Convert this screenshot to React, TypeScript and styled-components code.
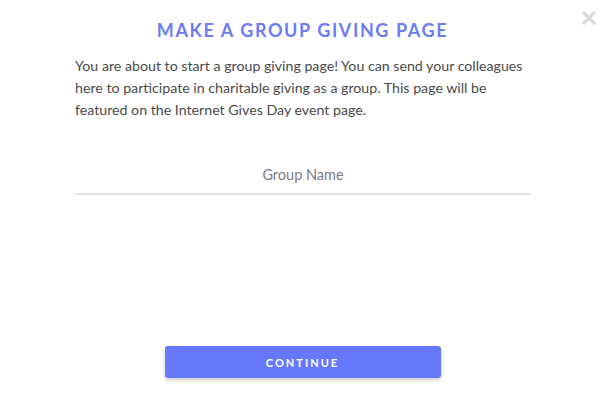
import React from "react";
import styled, { createGlobalStyle } from "styled-components";

const Global = createGlobalStyle`
  html, body { margin: 0; padding: 0; background: #fff; }
  body { font-family: Lato, "Open Sans", sans-serif; }
  * { box-sizing: border-box; }
`;

const Modal = styled.div`
  position: relative;
  width: 605px;
  height: 403px;
  background: #fff;
  display: flex;
  flex-direction: column;
  align-items: center;
  padding: 19px 75px 0 75px;
`;

const Close = styled.button`
  position: absolute;
  top: 9px;
  right: 7px;
  width: 18px;
  height: 18px;
  padding: 0;
  border: none;
  background: transparent;
  cursor: pointer;
`;

const Title = styled.h1`
  margin: 0;
  font-family: Lato, sans-serif;
  font-weight: 700;
  font-size: 18px;
  line-height: 22px;
  letter-spacing: 1.6px;
  color: #6b7cf5;
  text-transform: uppercase;
`;

const Body = styled.p`
  margin: 14px 0 0 0;
  align-self: stretch;
  font-family: Lato, sans-serif;
  font-size: 14.2px;
  line-height: 22px;
  color: #4a4a4a;
`;

const Field = styled.input`
  margin-top: 44px;
  width: 456px;
  align-self: flex-start;
  border: none;
  border-bottom: 2px solid #e3e3e3;
  padding: 0 0 8px 0;
  font-family: Lato, sans-serif;
  font-size: 14.5px;
  line-height: 20px;
  text-align: center;
  color: #4a4a4a;
  outline: none;
  &::placeholder { color: #7b7b88; }
`;

const Spacer = styled.div`
  flex: 1;
`;

const Button = styled.button`
  margin-bottom: 25px;
  width: 276px;
  height: 32px;
  border: none;
  border-radius: 3px;
  background: #6679fd;
  box-shadow: 0 2px 4px rgba(0, 0, 0, 0.22);
  color: #fff;
  font-family: Lato, sans-serif;
  font-weight: 700;
  font-size: 11px;
  letter-spacing: 2px;
  text-transform: uppercase;
  cursor: pointer;
`;

export default function App() {
  return (
    <>
      <Global />
      <Modal>
        <Close aria-label="close">
          <svg width="18" height="18" viewBox="0 0 18 18">
            <path d="M3 3 L15 15 M15 3 L3 15" stroke="#dcdcdc" strokeWidth="3.2" strokeLinecap="butt" />
          </svg>
        </Close>
        <Title>Make a group giving page</Title>
        <Body>
          You are about to start a group giving page! You can send your colleagues here to
          participate in charitable giving as a group. This page will be featured on the
          Internet Gives Day event page.
        </Body>
        <Field placeholder="Group Name" />
        <Spacer />
        <Button>Continue</Button>
      </Modal>
    </>
  );
}
